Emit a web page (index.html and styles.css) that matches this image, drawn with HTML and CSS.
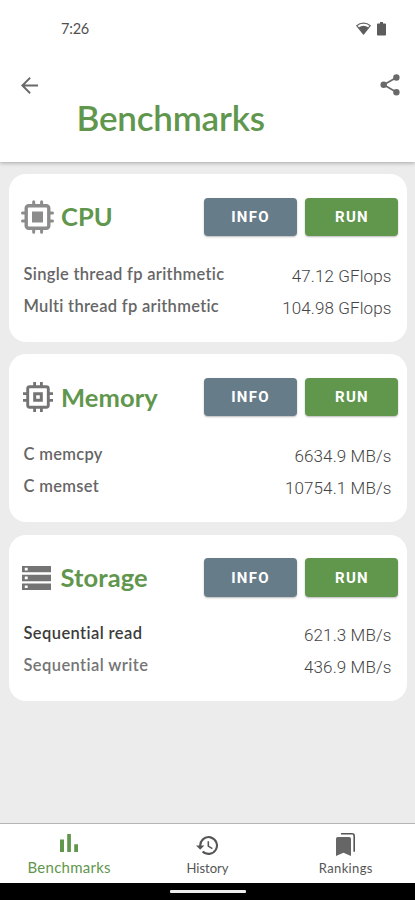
FILE: index.html
```html
<!DOCTYPE html>
<html lang="en">
<head>
<meta charset="utf-8">
<title>Benchmarks</title>
<link rel="stylesheet" href="styles.css">
</head>
<body>
<div class="screen">
  <header class="header">
    <div class="status">
      <span class="time">7:26</span>
      <span class="status-icons">
        <svg class="wifi" viewBox="0 0 15 13"><path d="M.7 3.700C4.500.3 10.500.3 14.300 3.700L7.500 12Z" fill="none" stroke="#666" stroke-width="1.200" stroke-linejoin="round"/><path d="M2.500 5.500Q7.500 2.100 12.500 5.500L7.500 12.200Z" fill="#5c5c5c"/></svg>
        <svg class="battery" viewBox="0 0 9 14"><path d="M3 0h3v1.400h2.200q.8 0 .8.800v10.500q0 .8-.8.800H.8q-.8 0-.8-.8V2.200q0-.8.8-.8H3z" fill="#5c5c5c"/></svg>
      </span>
    </div>
    <div class="toolbar">
      <svg class="back" viewBox="4 4 16 16"><path d="M20 11.100H7.600l5.600-5.700L12 4l-8 8 8 8 1.200-1.400-5.600-5.700H20z" fill="#696969"/></svg>
      <svg class="share" viewBox="0 0 20 22"><path d="M16.500 3.500 3.700 10.700l12.800 7.500" fill="none" stroke="#696969" stroke-width="1.700"/><circle cx="16.400" cy="3.500" r="3.200" fill="#696969"/><circle cx="3.700" cy="10.800" r="3.200" fill="#696969"/><circle cx="16.400" cy="18.200" r="3.200" fill="#696969"/></svg>
    </div>
    <h1 class="title">Benchmarks</h1>
  </header>
  <main class="cards">
    <section class="card card-cpu">
      <div class="card-head">
        <svg class="icon cpu" viewBox="0 0 33 34"><g fill="none" stroke="#8c8c8c"><rect x="5.200" y="5.700" width="22.600" height="22.600" rx="2.500" stroke-width="3.400"/><path d="M12.700 1.700V5M20.600 1.700V5M12.700 29v3.300M20.600 29v3.300M1.500 13h3.300M1.500 21h3.300M28.200 13h3.300M28.200 21h3.300" stroke-width="3" stroke-linecap="round"/></g><path d="M11 11.500h11v11H11z" fill="#8c8c8c"/></svg>
        <h2 class="name">CPU</h2>
        <button class="btn info">INFO</button><button class="btn run">RUN</button>
      </div>
      <dl class="rows">
        <div class="row"><dt>Single thread fp arithmetic</dt><dd>47.12 GFlops</dd></div>
        <div class="row"><dt>Multi thread fp arithmetic</dt><dd>104.98 GFlops</dd></div>
      </dl>
    </section>
    <section class="card card-memory">
      <div class="card-head">
        <svg class="icon mem" viewBox="0 0 30 30"><g fill="none" stroke="#747474"><rect x="4.700" y="4.700" width="20.600" height="20.600" rx="2" stroke-width="2.900"/><path d="M11.600 0v4M18.400 0v4M11.600 26v4M18.400 26v4M0 11.600h4M0 18.400h4M26 11.600h4M26 18.400h4" stroke-width="2.800"/><path d="M11.700 11.700h6.600v6.600h-6.600z" stroke-width="3"/></g></svg>
        <h2 class="name">Memory</h2>
        <button class="btn info">INFO</button><button class="btn run">RUN</button>
      </div>
      <dl class="rows">
        <div class="row"><dt>C memcpy</dt><dd>6634.9 MB/s</dd></div>
        <div class="row"><dt>C memset</dt><dd>10754.1 MB/s</dd></div>
      </dl>
    </section>
    <section class="card card-storage">
      <div class="card-head">
        <svg class="icon sto" viewBox="0 0 29 24"><path d="M0 0h29v6.300H0zM0 8.800h29v6.400H0zM0 17.600h29V24H0z" fill="#747474"/><path d="M2.800 1.800h2.900v2.700H2.800zM2.800 10.600h2.900v2.700H2.800zM2.800 19.400h2.900v2.700H2.800z" fill="#fff"/></svg>
        <h2 class="name">Storage</h2>
        <button class="btn info">INFO</button><button class="btn run">RUN</button>
      </div>
      <dl class="rows">
        <div class="row"><dt class="active">Sequential read</dt><dd>621.3 MB/s</dd></div>
        <div class="row"><dt class="muted">Sequential write</dt><dd>436.9 MB/s</dd></div>
      </dl>
    </section>
  </main>
  <nav class="nav">
    <a class="tab selected"><svg class="bars" viewBox="0 0 18 18"><path d="M0 5.500h4V18H0zM7.200 0h3.700v18H7.200zM14.200 10.300H18V18h-3.800z" fill="#61964d"/></svg><span>Benchmarks</span></a>
    <a class="tab"><svg class="history" viewBox="1 3 21 18"><path d="M13 3a9 9 0 0 0-9 9H1l3.890 3.890.07.140L9 12H6a7 7 0 1 1 2.060 4.940l-1.420 1.420A9 9 0 1 0 13 3zm-1 5v5l4.280 2.540.72-1.210-3.500-2.080V8H12z" fill="#555"/></svg><span>History</span></a>
    <a class="tab"><svg class="ranks" viewBox="0 0 19 23"><path d="M1.800 4h11.400q1.800 0 1.800 1.800V23l-7.500-3.200L0 23V5.800Q0 4 1.800 4z" fill="#666"/><path d="M5 .8h11q2.200 0 2.200 2.200v15.800" fill="none" stroke="#555" stroke-width="1.600"/></svg><span class="rank-label">Rankings</span></a>
  </nav>
  <footer class="gesture"><span></span></footer>
</div>
</body>
</html>
```
FILE: styles.css
```css
* { box-sizing: border-box; }
body { margin: 0; font-family: Lato, sans-serif; background: #ececec; }
h1, h2, dl, dd { margin: 0; }
svg { display: block; flex: none; }
.screen { height: 900px; display: flex; flex-direction: column; background: #ececec; overflow: hidden; }

.header { height: 162px; flex: none; background: #fff; box-shadow: 0 1px 4px rgba(0,0,0,.3); }
.status { height: 57px; padding: 0 29px 0 61px; display: flex; align-items: center; justify-content: space-between; }
.time { font-size: 14.500px; line-height: 18px; letter-spacing: -.2px; color: #505050; }
.status-icons { display: flex; align-items: center; gap: 6px; }
.wifi { width: 15px; height: 13px; }
.battery { width: 9px; height: 14px; }
.toolbar { height: 56px; padding: 0 15px 0 21px; display: flex; align-items: center; justify-content: space-between; }
.back { width: 17px; height: 17px; }
.share { width: 20px; height: 22px; }
.title { margin: -16px 0 0 76.500px; font-size: 35px; line-height: 41px; font-weight: 600; letter-spacing: -.2px; color: #61964d; }

.cards { flex: 1; padding: 12px 8.500px 0; display: flex; flex-direction: column; gap: 12.700px; }
.card { height: 167.700px; padding: 23.500px 8.500px 0 12px; border-radius: 17px; background: #fff; }
.card-storage { height: 166.700px; }
.card-head { height: 38.500px; display: flex; align-items: center; }
.icon.cpu { width: 33px; height: 34px; }
.icon.mem { width: 30px; height: 30px; margin: 0 1px 0 2px; }
.icon.sto { width: 29px; height: 24px; margin: 1px 2px 0 1.500px; }
.name { margin: -1px auto 0 7.500px; font-size: 25.500px; line-height: 32px; font-weight: 700; letter-spacing: .1px; color: #61964d; }
.btn { width: 93px; height: 38.500px; padding: 0 0 0 1px; border: 0; border-radius: 4px; color: #fff; font: 700 15px Roboto, sans-serif; letter-spacing: 1.300px; box-shadow: 0 1px 2px rgba(0,0,0,.28); }
.info { background: #667c89; }
.run { background: #61964d; margin-left: 8.500px; }
.rows { padding: 21px 6.500px 0 3px; }
.card-cpu .rows { padding-top: 22.600px; }
.card-memory .rows { padding-top: 22.300px; }
.row { height: 32.300px; display: flex; align-items: center; justify-content: space-between; color: #666; }
.row dt { font-size: 16.500px; line-height: 20px; font-weight: 600; letter-spacing: .3px; padding-bottom: 2px; }
.row dd { font: 300 17px/20px Roboto, sans-serif; letter-spacing: .1px; padding-top: 2px; color: #444; }
.row .active { color: #3c3c3c; letter-spacing: .4px; }
.row .muted { color: #757575; letter-spacing: .4px; }

.nav { height: 60px; flex: none; border-top: 1px solid #b5b5b5; background: #fff; display: grid; grid-template-columns: repeat(3, 1fr); }
.tab { display: flex; flex-direction: column; align-items: center; font: 400 13px/18px Lato, sans-serif; color: #555; }
.tab span { margin-top: auto; margin-bottom: 6px; }
.tab .rank-label { letter-spacing: .35px; }
.selected { color: #61964d; font-size: 15px; letter-spacing: .25px; }
.tab.selected span { margin-bottom: 7px; }
.bars { width: 18px; height: 18px; margin-top: 10px; }
.history { width: 22px; height: 19px; margin-top: 12px; }
.ranks { width: 19px; height: 23px; margin-top: 9px; }
.gesture { height: 17px; flex: none; background: #000; display: flex; justify-content: center; padding-top: 7px; }
.gesture span { width: 76px; height: 2.500px; border-radius: 1px; background: #eee; }
```
